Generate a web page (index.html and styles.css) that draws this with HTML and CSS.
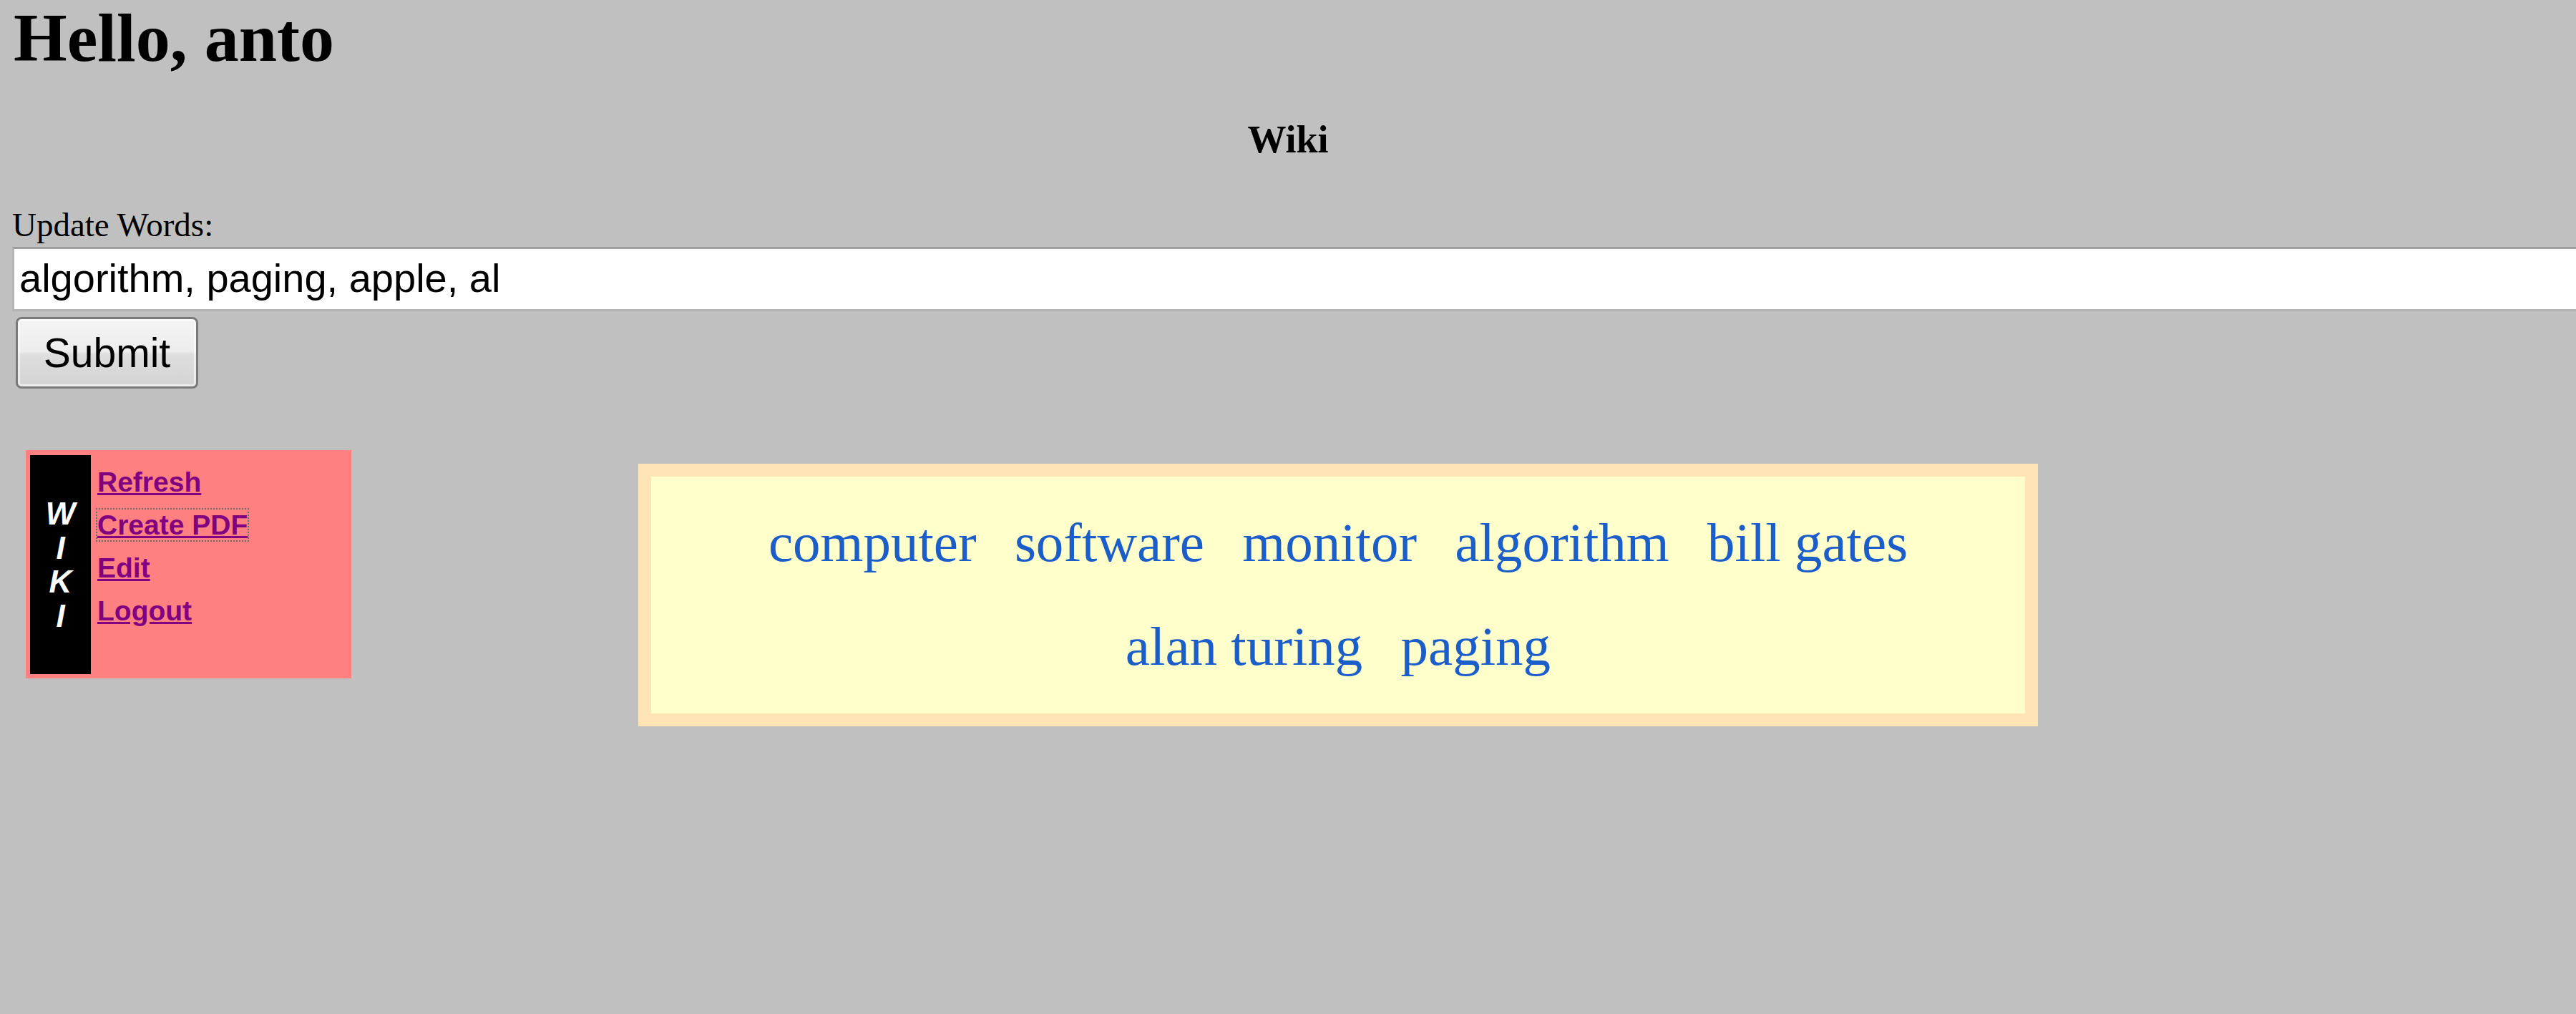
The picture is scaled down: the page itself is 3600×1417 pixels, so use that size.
FILE: index.html
```html
<!DOCTYPE html>
<html>
<head>
<meta charset="utf-8">
<title>Wiki</title>
<link rel="stylesheet" href="styles.css">
</head>
<body>
<h1 class="greeting">Hello, anto</h1>
<h3 class="title">Wiki</h3>
<form class="update-form">
  <label class="update-label" for="words">Update Words:</label>
  <input class="words-input" id="words" type="text" value="algorithm, paging, apple, al">
  <button class="submit-btn" type="button">Submit</button>
</form>
<div class="content-row">
  <div class="menu">
    <div class="menu-bar">
      <span class="menu-letter">W</span>
      <span class="menu-letter">I</span>
      <span class="menu-letter">K</span>
      <span class="menu-letter">I</span>
    </div>
    <ul class="menu-links">
      <li><a class="menu-link" href="#">Refresh</a></li>
      <li><a class="menu-link focused" href="#">Create PDF</a></li>
      <li><a class="menu-link" href="#">Edit</a></li>
      <li><a class="menu-link" href="#">Logout</a></li>
    </ul>
  </div>
  <div class="cloud">
    <div class="cloud-inner">
      <span class="tag">computer</span> <span class="tag">software</span> <span class="tag">monitor</span> <span class="tag">algorithm</span> <span class="tag">bill gates</span> <span class="tag">alan turing</span> <span class="tag">paging</span>
    </div>
  </div>
</div>
</body>
</html>
```
FILE: styles.css
```css
html {
  overflow: hidden;
}
body {
  margin: 0;
  padding: 0 17px;
  background: #c0c0c0;
  font-family: "Liberation Serif", "Times New Roman", serif;
  color: #000;
  overflow: hidden;
  min-height: 1417px;
  box-sizing: border-box;
}
.greeting {
  margin: 3px 0 0 2px;
  font-size: 96px;
  line-height: 100px;
  font-weight: bold;
}
.title {
  margin: 62px 0 0 0;
  font-size: 54px;
  line-height: 60px;
  font-weight: bold;
  text-align: center;
}
.update-form {
  margin: 64px 0 0 0;
}
.update-label {
  display: block;
  font-size: 47px;
  line-height: 50px;
}
.words-input {
  display: block;
  box-sizing: border-box;
  width: calc(100% + 80px);
  height: 90px;
  margin: 6px 0 0 0;
  padding: 0 7px 3px 7px;
  border: 3px solid #b4b4b4;
  border-top-color: #9d9d9d;
  background: #fff;
  font-family: "Liberation Sans", Arial, sans-serif;
  font-size: 56px;
  color: #000;
  outline: none;
}
.submit-btn {
  display: block;
  box-sizing: border-box;
  width: 255px;
  height: 100px;
  margin: 8px 0 0 5px;
  padding: 0;
  border: 3px solid #7a7a7a;
  border-radius: 8px;
  background: linear-gradient(to bottom, #f4f4f4 0%, #ededed 48%, #dedede 52%, #d3d3d3 100%);
  box-shadow: inset 0 0 0 3px rgba(255, 255, 255, 0.55);
  font-family: "Liberation Sans", Arial, sans-serif;
  font-size: 57px;
  color: #000;
}
.content-row {
  display: flex;
  align-items: flex-start;
  margin-top: 86px;
}
.menu {
  display: flex;
  box-sizing: border-box;
  width: 455px;
  height: 319px;
  margin-left: 19px;
  padding: 7px 6px 6px 6px;
  background: #ff8080;
  flex-shrink: 0;
}
.menu-bar {
  width: 85px;
  background: #000;
  display: flex;
  flex-direction: column;
  align-items: center;
  justify-content: center;
  flex-shrink: 0;
}
.menu-letter {
  display: block;
  color: #fff;
  font-family: "Liberation Sans", Arial, sans-serif;
  font-weight: bold;
  font-style: italic;
  font-size: 44px;
  line-height: 47.5px;
}
.menu-links {
  list-style: none;
  margin: 0;
  padding: 8px 0 0 9px;
}
.menu-links li {
  font-family: "Liberation Sans", Arial, sans-serif;
  font-weight: bold;
  font-size: 39px;
  line-height: 60px;
}
.menu-link {
  color: #800080;
  text-decoration: underline;
}
.menu-link.focused {
  outline: 2px dotted #6a6a6a;
}
.cloud {
  box-sizing: border-box;
  width: 1956px;
  margin: 19px 0 0 401px;
  border: 18px solid #ffe4b5;
  background: #ffffcc;
  flex-shrink: 0;
}
.cloud-inner {
  padding: 20px 20px 21px 20px;
  text-align: center;
  font-size: 77px;
  line-height: 145px;
  color: #1c5ec9;
}
.tag {
  margin: 0 17px;
  white-space: nowrap;
}
```
